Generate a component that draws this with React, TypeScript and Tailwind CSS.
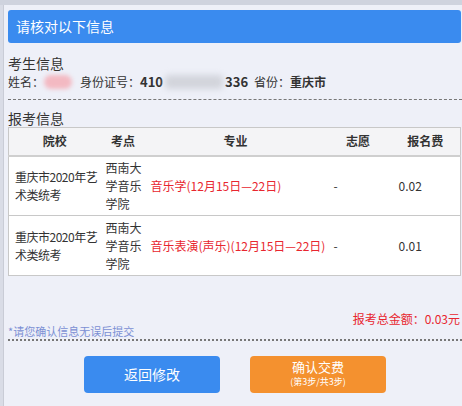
export default function App() {
  const rows = [
    { major: "音乐学(12月15日—22日)", fee: "0.02" },
    { major: "音乐表演(声乐)(12月15日—22日)", fee: "0.01" },
  ];
  return (
    <div className="w-[462px] h-[406px] overflow-hidden bg-[#d9dce6] font-['Noto_Sans_CJK_SC',sans-serif] text-[#333]">
      <div className="h-[5px] bg-[#cfd3de]" />
      <div className="ml-[3px] h-[401px] bg-[#eef0f8] border-l border-[#c9ccd6] pl-[4px] flex flex-col">
        <div className="mt-[5px] h-[33px] rounded-[3px] bg-[#3a8bef] text-white text-[14px] flex items-center pl-[8px] mr-[1px]">
          请核对以下信息
        </div>
        <div className="mt-[11px] text-[14px] leading-[18px]">考生信息</div>
        <div className="mt-[1px] text-[12px] leading-[18px] flex items-center">
          <span>姓名：</span>
          <span className="w-[28px] h-[14px] rounded-full bg-[#f3b9c2] blur-[2px]" />
          <span className="ml-[8px]">身份证号：</span>
          <span className="font-bold text-[13px]">410</span>
          <span className="w-[58px] h-[14px] mx-[2px] rounded bg-[#d2d4db] blur-[3px]" />
          <span className="font-bold text-[13px]">336</span>
          <span className="ml-[6px]">省份：</span>
          <span className="font-bold">重庆市</span>
        </div>
        <div className="mt-[8px] border-t border-dashed border-[#777]" />
        <div className="mt-[9px] text-[14px] leading-[18px]">报考信息</div>
        <table className="mt-0 w-[452px] border-collapse border border-[#c8c8c8] bg-white text-[12px] table-fixed">
          <colgroup>
            <col className="w-[92px]" />
            <col className="w-[45px]" />
            <col className="w-[180px]" />
            <col className="w-[65px]" />
            <col className="w-[70px]" />
          </colgroup>
          <thead>
            <tr className="h-[28px] bg-[#f4f4f6] border-b-2 border-[#cfcfcf]">
              <th className="font-bold">院校</th>
              <th className="font-bold">考点</th>
              <th className="font-bold">专业</th>
              <th className="font-bold">志愿</th>
              <th className="font-bold">报名费</th>
            </tr>
          </thead>
          <tbody>
            {rows.map((r, i) => (
              <tr key={i} className="h-[60px] border-b border-[#c8c8c8] leading-[18px]">
                <td className="pl-[6px] pr-0 tracking-[-0.5px]">重庆市2020年艺术类统考</td>
                <td className="pl-[5px]">西南大学音乐学院</td>
                <td className="pl-[5px] text-[#e8262f]">{r.major}</td>
                <td className="pl-[8px]">-</td>
                <td className="pl-[8px]">{r.fee}</td>
              </tr>
            ))}
          </tbody>
        </table>
        <div className="mt-[35px] text-right text-[12px] leading-[16px] text-[#e8262f] pr-[2px]">报考总金额：0.03元</div>
        <div className="-mt-[3px] text-[11px] leading-[14px] text-[#7b8fd4]">*请您确认信息无误后提交</div>
        <div className="mt-[1px] border-t-2 border-dotted border-[#777]" />
        <div className="mt-[15px] flex gap-[30px] pl-[76px]">
          <button className="w-[136px] h-[37px] rounded-[4px] bg-[#3a8bef] text-white text-[14px]">返回修改</button>
          <button className="w-[136px] h-[37px] rounded-[4px] bg-[#f4912f] text-white flex flex-col items-center justify-center leading-[14px]">
            <span className="text-[13px]">确认交费</span>
            <span className="text-[9px] mt-[1px]">(第3步/共3步)</span>
          </button>
        </div>
      </div>
    </div>
  );
}
